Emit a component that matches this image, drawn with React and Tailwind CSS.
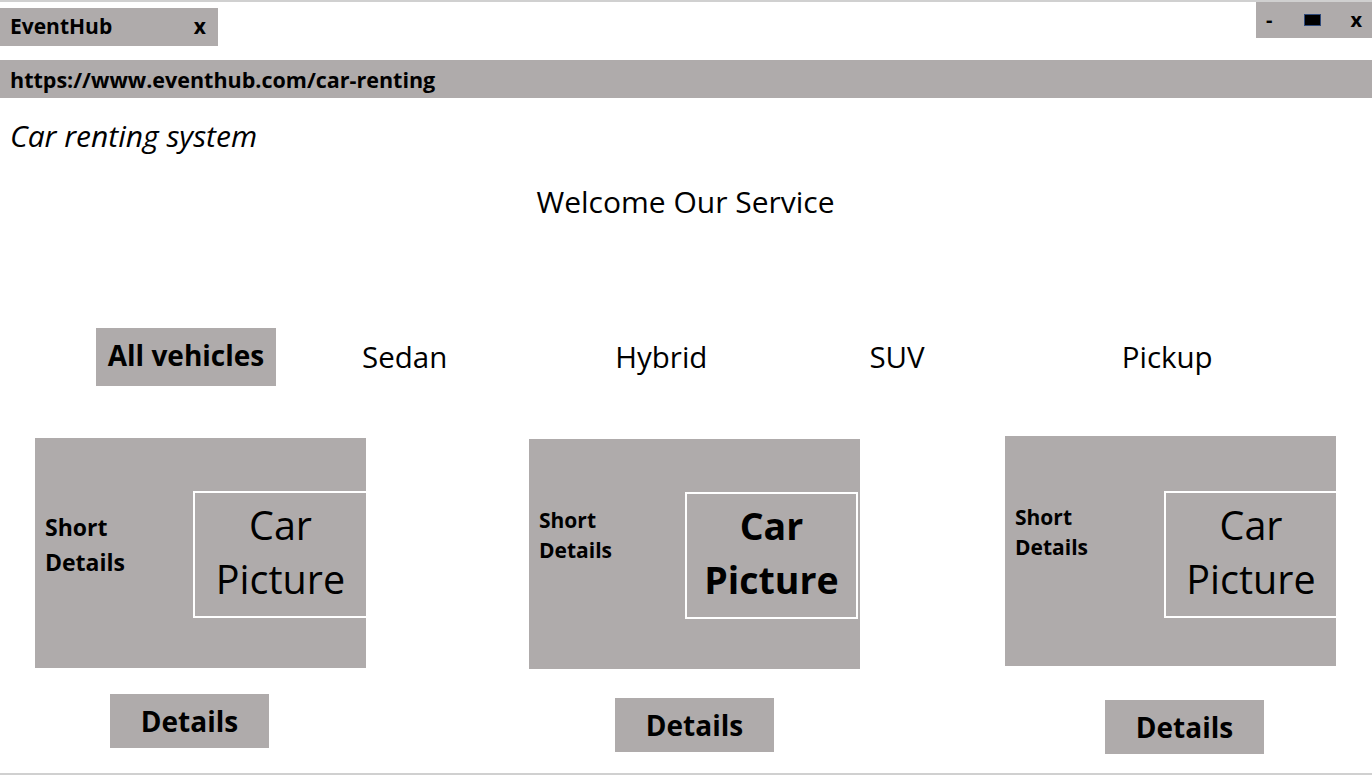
const cards = [
  { mt: "mt-[52px]", ml: "ml-[35px]", bold: false, leftW: "w-[158px]", picCls: "border-r-0", shortCls: "text-[23px] leading-[35px] mt-[72px]", picMt: "mt-[53px]", btnMt: "mt-[26px]", btnMl: "ml-[75px]" },
  { mt: "mt-[53px]", ml: "ml-[163px]", bold: true, leftW: "w-[156px]", picCls: "", shortCls: "text-[21px] leading-[30px] mt-[66px]", picMt: "mt-[53px]", btnMt: "mt-[29px]", btnMl: "ml-[86px]" },
  { mt: "mt-[50px]", ml: "ml-[145px]", bold: false, leftW: "w-[159px]", picCls: "border-r-0", shortCls: "text-[21px] leading-[30px] mt-[66px]", picMt: "mt-[55px]", btnMt: "mt-[34px]", btnMl: "ml-[100px]" },
];

function Card({ c }) {
  return (
    <div className={`${c.mt} ${c.ml} flex flex-col`}>
      <div className="w-[331px] h-[230px] bg-[#afabab] flex">
        <div className={`${c.leftW} shrink-0 pl-[10px] font-bold text-black ${c.shortCls} self-start`}>
          Short<br />Details
        </div>
        <div className={`${c.picMt} ${c.picCls} w-[173px] h-[127px] border-2 border-white flex flex-col items-center justify-center`}>
          <span className={`leading-[54px] text-black text-center pb-[6px] ${c.bold ? "font-bold text-[37.5px]" : "text-[39.5px]"}`}>
            Car<br />Picture
          </span>
        </div>
      </div>
      <button className={`${c.btnMt} ${c.btnMl} w-[159px] h-[54px] bg-[#afabab] text-[28px] font-bold text-black`}>
        Details
      </button>
    </div>
  );
}

export default function App() {
  return (
    <div className="w-[1372px] h-[777px] bg-white relative overflow-hidden font-['Open_Sans',sans-serif] text-black">
      <div className="h-[2px] bg-[#d0d0d0]" />
      <div className="flex items-start justify-between">
        <div className="mt-[6px] w-[218px] h-[38px] bg-[#afabab] flex items-center justify-between pl-[10px] pr-[12px] text-[21px] font-bold">
          <span>EventHub</span>
          <span>x</span>
        </div>
        <div className="w-[116px] h-[36px] bg-[#afabab] flex items-center justify-between pl-[10px] pr-[10px] text-[20px] font-bold">
          <span>-</span>
          <span className="ml-[2px] w-[17px] h-[12px] bg-black border border-[#2f4a7a]" />
          <span>x</span>
        </div>
      </div>
      <div className="mt-[14px] h-[38px] bg-[#afabab] flex items-center pl-[10px] pt-[2px] text-[21.5px] font-bold">
        https://www.eventhub.com/car-renting
      </div>
      <div className="mt-[18px] pl-[10px] text-[30px] italic leading-[40px]">Car renting system</div>
      <div className="mt-[26px] text-center text-[30px] leading-[40px] pr-[1px]">Welcome Our Service</div>
      <div className="mt-[106px] flex items-center text-[29.5px]">
        <div className="ml-[96px] w-[180px] h-[58px] bg-[#afabab] flex items-center justify-center font-bold pb-[4px] text-[28px]">
          All vehicles
        </div>
        <span className="ml-[86px]">Sedan</span>
        <span className="ml-[168px]">Hybrid</span>
        <span className="ml-[162px]">SUV</span>
        <span className="ml-[197px]">Pickup</span>
      </div>
      <div className="flex items-start">
        {cards.map((c, i) => (
          <Card key={i} c={c} />
        ))}
      </div>
      <div className="absolute left-0 right-0 bottom-[2px] h-[2px] bg-[#d0d0d0]" />
    </div>
  );
}
